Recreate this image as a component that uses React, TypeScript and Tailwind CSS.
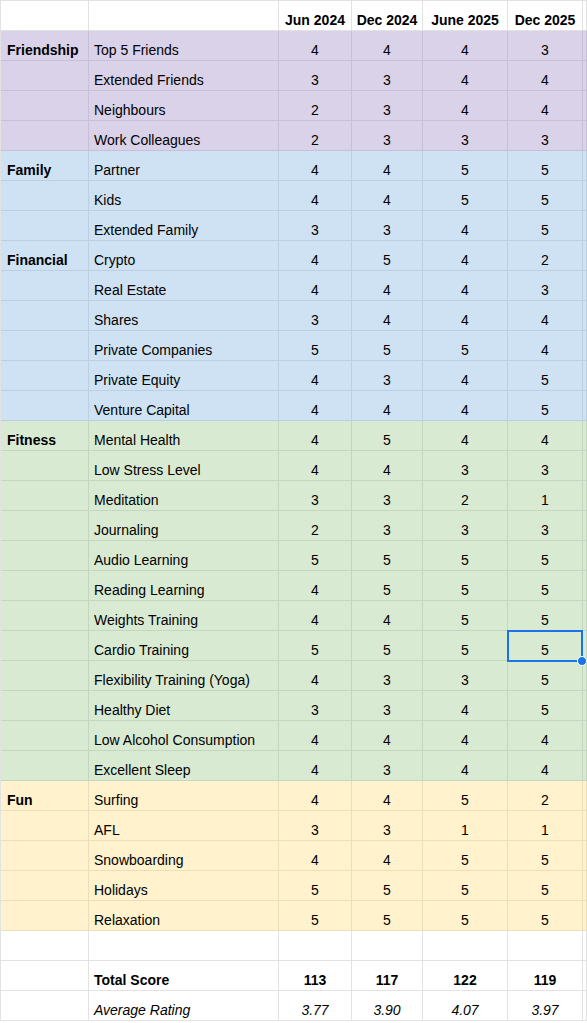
type Tone = "purple" | "blue" | "green" | "yellow" | "white";

const tones: Record<Tone, string> = {
  purple: "bg-[#d9d2e9] border-[#c6bfd6]",
  blue: "bg-[#cfe2f3] border-[#bccfe0]",
  green: "bg-[#d9ead3] border-[#c5d6c0]",
  yellow: "bg-[#fff2cc] border-[#ebdeb8]",
  white: "bg-white border-[#e2e2e2]",
};

const groups: { name: string; tone: Tone; rows: [string, number[]][] }[] = [
  {
    name: "Friendship",
    tone: "purple",
    rows: [
      ["Top 5 Friends", [4, 4, 4, 3]],
      ["Extended Friends", [3, 3, 4, 4]],
      ["Neighbours", [2, 3, 4, 4]],
      ["Work Colleagues", [2, 3, 3, 3]],
    ],
  },
  {
    name: "Family",
    tone: "blue",
    rows: [
      ["Partner", [4, 4, 5, 5]],
      ["Kids", [4, 4, 5, 5]],
      ["Extended Family", [3, 3, 4, 5]],
    ],
  },
  {
    name: "Financial",
    tone: "blue",
    rows: [
      ["Crypto", [4, 5, 4, 2]],
      ["Real Estate", [4, 4, 4, 3]],
      ["Shares", [3, 4, 4, 4]],
      ["Private Companies", [5, 5, 5, 4]],
      ["Private Equity", [4, 3, 4, 5]],
      ["Venture Capital", [4, 4, 4, 5]],
    ],
  },
  {
    name: "Fitness",
    tone: "green",
    rows: [
      ["Mental Health", [4, 5, 4, 4]],
      ["Low Stress Level", [4, 4, 3, 3]],
      ["Meditation", [3, 3, 2, 1]],
      ["Journaling", [2, 3, 3, 3]],
      ["Audio Learning", [5, 5, 5, 5]],
      ["Reading Learning", [4, 5, 5, 5]],
      ["Weights Training", [4, 4, 5, 5]],
      ["Cardio Training", [5, 5, 5, 5]],
      ["Flexibility Training (Yoga)", [4, 3, 3, 5]],
      ["Healthy Diet", [3, 3, 4, 5]],
      ["Low Alcohol Consumption", [4, 4, 4, 4]],
      ["Excellent Sleep", [4, 3, 4, 4]],
    ],
  },
  {
    name: "Fun",
    tone: "yellow",
    rows: [
      ["Surfing", [4, 4, 5, 2]],
      ["AFL", [3, 3, 1, 1]],
      ["Snowboarding", [4, 4, 5, 5]],
      ["Holidays", [5, 5, 5, 5]],
      ["Relaxation", [5, 5, 5, 5]],
    ],
  },
];

const Cell = ({
  tone,
  children,
  className = "",
  selected = false,
}: {
  tone: Tone;
  children?: React.ReactNode;
  className?: string;
  selected?: boolean;
}) => (
  <div
    className={`relative flex h-[30px] items-end border-r border-b pb-[1px] leading-[17px] whitespace-nowrap ${tones[tone]} ${className}`}
  >
    {children}
    {selected && (
      <div className="absolute -top-[1px] -left-[1px] z-10 h-[32px] w-[76px] border-2 border-[#1a73e8]">
        <div className="absolute -right-[6px] -bottom-[6px] h-[10px] w-[10px] rounded-full border border-white bg-[#1a73e8]" />
      </div>
    )}
  </div>
);

export default function App() {
  const headers = ["Jun 2024", "Dec 2024", "June 2025", "Dec 2025"];
  return (
    <div
      className="h-[1023px] w-[587px] overflow-hidden bg-white text-[14px] text-black"
      style={{ fontFamily: '"Liberation Sans", Arial, sans-serif' }}
    >
      <div className="grid grid-cols-[88px_190px_73px_71px_85px_75px_1fr] border-t border-l border-[#e2e2e2]">
        <Cell tone="white" />
        <Cell tone="white" />
        {headers.map((h) => (
          <Cell key={h} tone="white" className="justify-center font-bold">
            {h}
          </Cell>
        ))}
        <Cell tone="white" />

        {groups.map((g) =>
          g.rows.map(([label, vals], i) => (
            <div key={g.name + label} className="contents">
              <Cell tone={g.tone} className="pl-[6px] font-bold">
                {i === 0 ? g.name : ""}
              </Cell>
              <Cell tone={g.tone} className="pl-[5px]">
                {label}
              </Cell>
              {vals.map((v, j) => (
                <Cell
                  key={j}
                  tone={g.tone}
                  className="justify-center"
                  selected={label === "Cardio Training" && j === 3}
                >
                  {v}
                </Cell>
              ))}
              <Cell tone={g.tone} />
            </div>
          ))
        )}

        {/* spacer row */}
        <Cell tone="white" />
        <Cell tone="white" />
        <Cell tone="white" />
        <Cell tone="white" />
        <Cell tone="white" />
        <Cell tone="white" />
        <Cell tone="white" />

        <Cell tone="white" />
        <Cell tone="white" className="pl-[5px] font-bold">
          Total Score
        </Cell>
        {["113", "117", "122", "119"].map((t) => (
          <Cell key={t} tone="white" className="justify-center font-bold">
            {t}
          </Cell>
        ))}
        <Cell tone="white" />

        <Cell tone="white" />
        <Cell tone="white" className="pl-[5px] italic">
          Average Rating
        </Cell>
        {["3.77", "3.90", "4.07", "3.97"].map((t) => (
          <Cell key={t} tone="white" className="justify-center italic">
            {t}
          </Cell>
        ))}
        <Cell tone="white" />
      </div>
    </div>
  );
}
